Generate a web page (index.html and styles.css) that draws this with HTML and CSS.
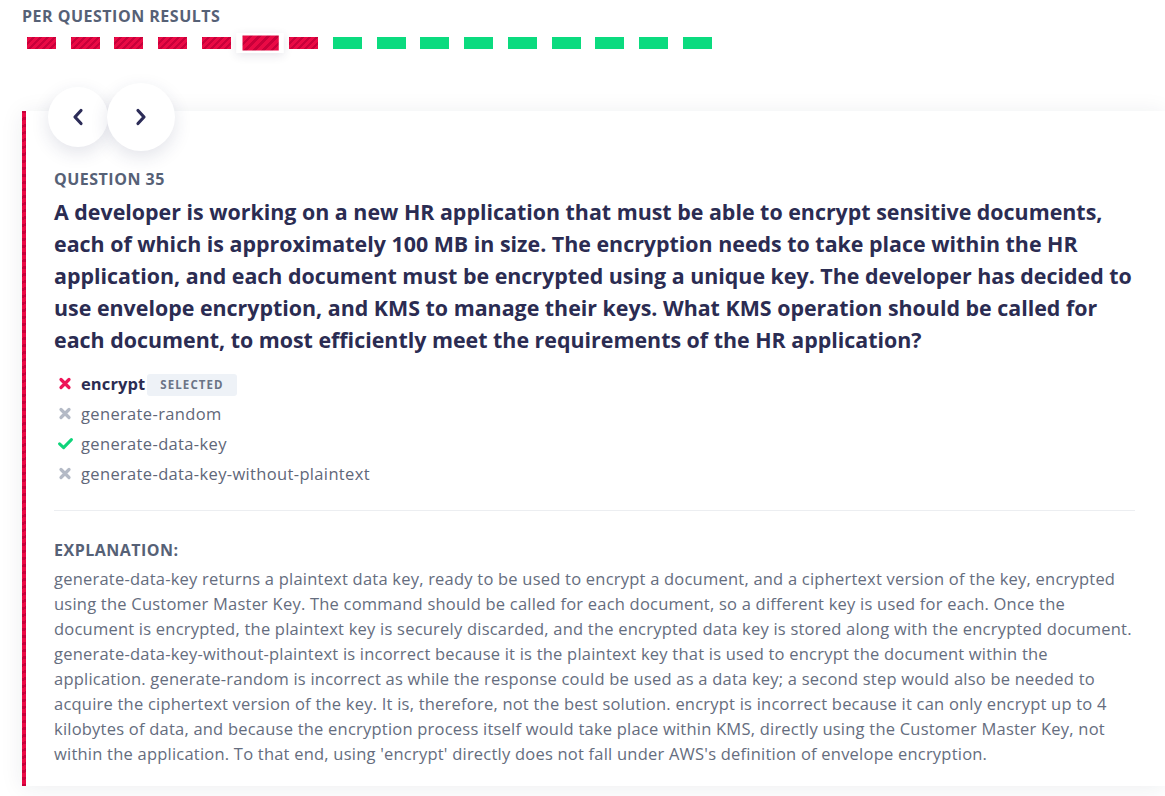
FILE: index.html
```html
<!DOCTYPE html>
<html>
<head>
<meta charset="utf-8">
<link rel="stylesheet" href="styles.css">
</head>
<body>
<section class="results">
  <h2 class="results-title">Per question results</h2>
  <div class="bars">
    <span class="bar wrong"></span>
    <span class="bar wrong"></span>
    <span class="bar wrong"></span>
    <span class="bar wrong"></span>
    <span class="bar wrong"></span>
    <span class="bar-slot"><span class="bar wrong"></span></span>
    <span class="bar wrong"></span>
    <span class="bar right"></span>
    <span class="bar right"></span>
    <span class="bar right"></span>
    <span class="bar right"></span>
    <span class="bar right"></span>
    <span class="bar right"></span>
    <span class="bar right"></span>
    <span class="bar right"></span>
    <span class="bar right"></span>
  </div>
</section>

<article class="card">
  <div class="nav">
    <button class="nav-btn prev" aria-label="Previous">
      <svg width="14" height="20" viewBox="0 0 14 20"><path d="M10 3.5 L4 10 L10 16.5" fill="none" stroke="#2c2c58" stroke-width="3.2" stroke-linecap="round" stroke-linejoin="round"/></svg>
    </button>
    <button class="nav-btn next" aria-label="Next">
      <svg width="14" height="20" viewBox="0 0 14 20"><path d="M4 3.5 L10 10 L4 16.5" fill="none" stroke="#2c2c58" stroke-width="3.2" stroke-linecap="round" stroke-linejoin="round"/></svg>
    </button>
  </div>

  <div class="q-label">Question 35</div>
  <h1 class="q-text">A developer is working on a new HR application that must be able to encrypt sensitive documents, each of which is approximately 100 MB in size. The encryption needs to take place within the HR application, and each document must be encrypted using a unique key. The developer has decided to use envelope encryption, and KMS to manage their keys. What KMS operation should be called for each document, to most efficiently meet the requirements of the HR application?</h1>

  <ul class="options">
    <li class="opt selected">
      <svg class="ic" width="15" height="13" viewBox="0 0 15 13"><path d="M3 2.5 L11 10.5 M11 2.5 L3 10.5" stroke="#ee1458" stroke-width="3.2" stroke-linecap="round"/></svg>
      <span class="opt-text">encrypt</span><span class="badge">Selected</span>
    </li>
    <li class="opt">
      <svg class="ic" width="15" height="13" viewBox="0 0 15 13"><path d="M3 2.5 L11 10.5 M11 2.5 L3 10.5" stroke="#b4bac6" stroke-width="3.2" stroke-linecap="round"/></svg>
      <span class="opt-text">generate-random</span>
    </li>
    <li class="opt">
      <svg class="ic" width="15" height="13" viewBox="0 0 15 13"><path d="M1.6 6.8 L5.6 10.6 L13.4 2.6" fill="none" stroke="#0ed47a" stroke-width="3" stroke-linecap="round" stroke-linejoin="round"/></svg>
      <span class="opt-text">generate-data-key</span>
    </li>
    <li class="opt">
      <svg class="ic" width="15" height="13" viewBox="0 0 15 13"><path d="M3 2.5 L11 10.5 M11 2.5 L3 10.5" stroke="#b4bac6" stroke-width="3.2" stroke-linecap="round"/></svg>
      <span class="opt-text">generate-data-key-without-plaintext</span>
    </li>
  </ul>

  <hr class="divider">

  <div class="ex-label">Explanation:</div>
  <p class="ex-text">generate-data-key returns a plaintext data key, ready to be used to encrypt a document, and a ciphertext version of the key, encrypted using the Customer Master Key. The command should be called for each document, so a different key is used for each. Once the document is encrypted, the plaintext key is securely discarded, and the encrypted data key is stored along with the encrypted document. generate-data-key-without-plaintext is incorrect because it is the plaintext key that is used to encrypt the document within the application. generate-random is incorrect as while the response could be used as a data key; a second step would also be needed to acquire the ciphertext version of the key. It is, therefore, not the best solution. encrypt is incorrect because it can only encrypt up to 4 kilobytes of data, and because the encryption process itself would take place within KMS, directly using the Customer Master Key, not within the application. To that end, using 'encrypt' directly does not fall under AWS's definition of envelope encryption.</p>
</article>
</body>
</html>
```

FILE: styles.css
```css
* { box-sizing: border-box; }
html, body { margin: 0; background: #fff; }
body {
  font-family: "Open Sans", "Noto Sans", sans-serif;
  color: #2b2c52;
  overflow: hidden;
}

.results { padding: 6px 0 0 22px; }
.results-title {
  margin: 0;
  font-size: 16px;
  line-height: 20px;
  font-weight: 700;
  letter-spacing: 0.5px;
  text-transform: uppercase;
  color: #566176;
}
.bars {
  display: flex;
  align-items: center;
  height: 24px;
  margin-top: 5px;
  padding-left: 5px;
}
.bar {
  display: block;
  width: 29px;
  height: 12px;
  margin-right: 14.73px;
  flex: none;
}
.bar.wrong {
  background: repeating-linear-gradient(-45deg, #ea0a45 0 3px, #c9003a 3px 5px);
}
.bar.right { background: #0bdb7f; }
.bar-slot {
  display: block;
  flex: none;
  padding: 2px 4.5px;
  margin: 0 10.23px 0 -4.5px;
  background: #fff;
  box-shadow: 0 2px 8px rgba(40, 45, 80, 0.12);
  transform: scale(1.25);
}
.bar-slot .bar { margin: 0; }

.card {
  position: relative;
  margin: 56px 0 10px 22px;
  padding: 58px 30px 20px 28px;
  border-left: 4px solid transparent;
  border-image: repeating-linear-gradient(-45deg, #ea0a45 0 3px, #c9003a 3px 5px) 1;
  background: #fff;
  box-shadow: 0 2px 22px rgba(30, 35, 70, 0.08);
}

.nav { position: absolute; top: -28px; left: 22px; display: flex; align-items: center; }
.nav-btn {
  display: flex;
  align-items: center;
  justify-content: center;
  border: 0;
  border-radius: 50%;
  background: #fff;
  padding: 0;
  box-shadow: 0 6px 18px rgba(40, 45, 90, 0.13);
}
.nav-btn.prev { width: 60px; height: 60px; }
.nav-btn.next { width: 68px; height: 68px; margin-left: -1px; }

.q-label {
  font-size: 16px;
  line-height: 21px;
  font-weight: 700;
  letter-spacing: 0.5px;
  text-transform: uppercase;
  color: #566176;
}
.q-text {
  margin: 6px -5px 0 0;
  font-size: 21.4px;
  line-height: 32px;
  font-weight: 700;
  color: #2b2c52;
}

.options { list-style: none; margin: 12px 0 0; padding: 0 0 0 4px; }
.opt {
  display: flex;
  align-items: center;
  height: 30px;
  font-size: 16.5px;
  letter-spacing: 0.35px;
  color: #5f6779;
}
.ic { flex: none; margin-right: 8px; }
.opt.selected .opt-text { font-weight: 700; color: #2b2c52; letter-spacing: 0.1px; }
.badge {
  margin: 3px 0 0 2px;
  padding: 3px 13px;
  background: #eef2f7;
  border-radius: 3px;
  font-size: 11.5px;
  line-height: 16px;
  font-weight: 700;
  letter-spacing: 1.1px;
  text-transform: uppercase;
  color: #6b7486;
}

.divider { margin: 22px 0 0; border: 0; border-top: 1.5px solid #eceef1; }

.ex-label {
  margin-top: 29px;
  font-size: 16px;
  line-height: 21px;
  font-weight: 700;
  letter-spacing: 0.5px;
  text-transform: uppercase;
  color: #566176;
}
.ex-text {
  margin: 5px -5px 0 0;
  font-size: 16.5px;
  letter-spacing: 0.22px;
  line-height: 25px;
  color: #656d7e;
}
```
